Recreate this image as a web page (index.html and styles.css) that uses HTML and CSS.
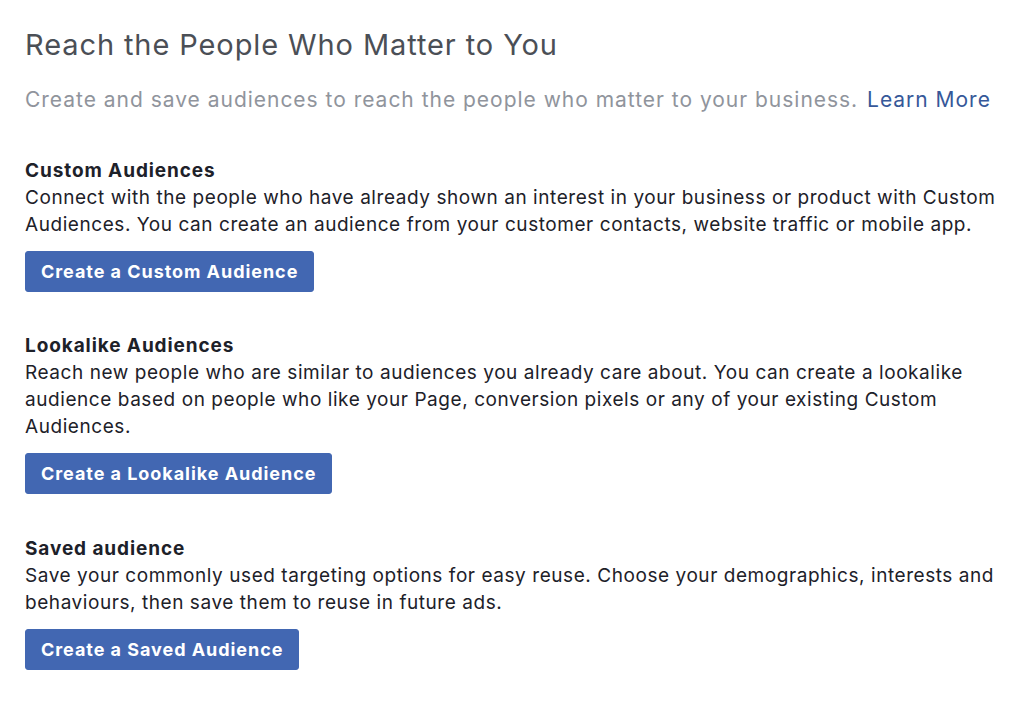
FILE: index.html
```html
<!DOCTYPE html>
<html>
<head>
<meta charset="utf-8">
<link rel="stylesheet" href="styles.css">
</head>
<body>
<main class="page">
  <h1 class="title">Reach the People Who Matter to You</h1>
  <p class="subtitle">Create and save audiences to reach the people who matter to your business. <a class="link" href="#">Learn More</a></p>

  <section class="block">
    <h2 class="block-title">Custom Audiences</h2>
    <p class="block-text">Connect with the people who have already shown an interest in your business or product with Custom Audiences. You can create an audience from your customer contacts, website traffic or mobile app.</p>
    <button class="btn">Create a Custom Audience</button>
  </section>

  <section class="block">
    <h2 class="block-title">Lookalike Audiences</h2>
    <p class="block-text">Reach new people who are similar to audiences you already care about. You can create a lookalike audience based on people who like your Page, conversion pixels or any of your existing Custom Audiences.</p>
    <button class="btn">Create a Lookalike Audience</button>
  </section>

  <section class="block">
    <h2 class="block-title">Saved audience</h2>
    <p class="block-text">Save your commonly used targeting options for easy reuse. Choose your demographics, interests and behaviours, then save them to reuse in future ads.</p>
    <button class="btn">Create a Saved Audience</button>
  </section>
</main>
</body>
</html>
```

FILE: styles.css
```css
* { box-sizing: border-box; }
html, body { margin: 0; padding: 0; background: #fff; }
body { font-family: Inter, "Liberation Sans", Arial, sans-serif; }
.page { padding: 26px 25px 0 25px; width: 1024px; }
.title {
  margin: 0;
  font-size: 29px;
  line-height: 38px;
  font-weight: 400;
  letter-spacing: 0.9px;
  color: #4b4f56;
}
.subtitle {
  margin: 22px 0 0 0;
  font-size: 21px;
  line-height: 28px;
  letter-spacing: 0.98px;
  color: #90949c;
}
.link { color: #365899; text-decoration: none; margin-left: 2px; }
.block { margin-top: 43px; }
.block + .block { margin-top: 40px; }
.block:last-child { margin-top: 41px; }
.block-title {
  margin: 0;
  font-size: 19px;
  line-height: 27px;
  font-weight: 700;
  letter-spacing: 0.9px;
  color: #1d2129;
}
.block-text {
  margin: 0;
  font-size: 19px;
  line-height: 27px;
  letter-spacing: 0.56px;
  color: #1d2129;
}
.btn {
  margin-top: 13px;
  display: inline-block;
  height: 41px;
  padding: 0 15px;
  border: 1px solid #4267b2;
  border-radius: 3px;
  background: #4267b2;
  color: #fff;
  font-family: Inter, "Liberation Sans", Arial, sans-serif;
  font-size: 18px;
  font-weight: 700;
  letter-spacing: 0.95px;
  cursor: pointer;
}
```
